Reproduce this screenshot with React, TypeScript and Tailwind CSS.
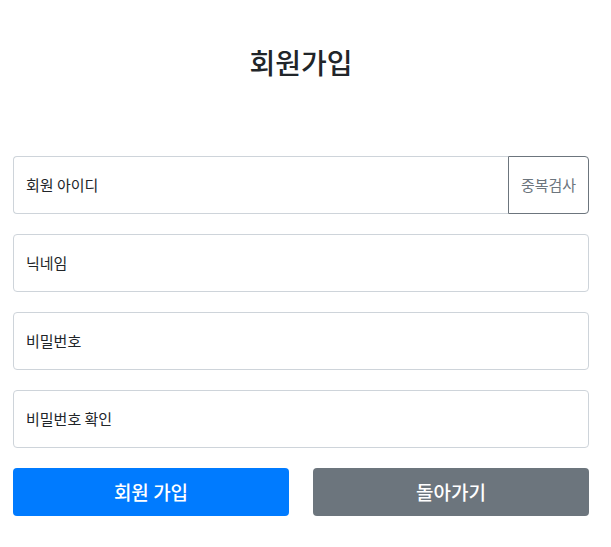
import React from "react";

export default function App() {
  const font = { fontFamily: '"Noto Sans CJK KR", "Noto Sans", sans-serif' };
  return (
    <div className="min-h-[547px] w-full bg-white pl-[13px] pr-[22px]" style={font}>
      <h1 className="pt-[44px] text-center text-[28px] leading-[36px] font-medium text-[#212529]">회원가입</h1>
      <div className="mt-[76px] flex flex-col gap-[20px]">
        <div className="flex h-[58px]">
          <div className="flex flex-1 items-center rounded-l-[4px] border border-r-0 border-[#ced4da] px-[12px] text-[15px] text-[#212529]">회원 아이디</div>
          <button className="flex w-[81px] items-center justify-center rounded-r-[4px] border border-[#6c757d] text-[15px] text-[#6c757d]">중복검사</button>
        </div>
        <div className="flex h-[58px] items-center rounded-[4px] border border-[#ced4da] px-[12px] text-[15px] text-[#212529]">닉네임</div>
        <div className="flex h-[58px] items-center rounded-[4px] border border-[#ced4da] px-[12px] text-[15px] text-[#212529]">비밀번호</div>
        <div className="flex h-[58px] items-center rounded-[4px] border border-[#ced4da] px-[12px] text-[15px] text-[#212529]">비밀번호 확인</div>
        <div className="flex gap-[24px]">
          <button className="flex h-[48px] flex-1 items-center justify-center rounded-[4px] bg-[#007bff] text-[19px] font-medium text-white">회원 가입</button>
          <button className="flex h-[48px] flex-1 items-center justify-center rounded-[4px] bg-[#6c757d] text-[19px] font-medium text-white">돌아가기</button>
        </div>
      </div>
    </div>
  );
}
